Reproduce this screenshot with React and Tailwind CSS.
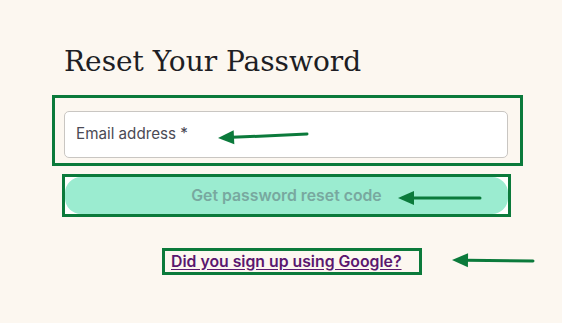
import React from "react";

function Arrow({ x1, y1, x2, y2 }) {
  const dx = x2 - x1, dy = y2 - y1;
  const len = Math.sqrt(dx * dx + dy * dy);
  const ux = dx / len, uy = dy / len;
  const hl = 16, hw = 7;
  const bx = x2 - ux * hl, by = y2 - uy * hl;
  const p1 = `${bx - uy * hw},${by + ux * hw}`;
  const p2 = `${bx + uy * hw},${by - ux * hw}`;
  return (
    <g>
      <line x1={x1} y1={y1} x2={bx + ux * 2} y2={by + uy * 2} stroke="#0b7a3b" strokeWidth="3" strokeLinecap="round" />
      <polygon points={`${x2},${y2} ${p1} ${p2}`} fill="#0b7a3b" />
    </g>
  );
}

export default function App() {
  return (
    <div className="relative w-[562px] h-[323px] overflow-hidden bg-[#fcf7f0] font-['Inter','Liberation_Sans',sans-serif]">
      <div className="flex flex-col pt-[44px]">
        <h1 className="ml-[64px] text-[28px] leading-[36px] text-[#1e1e24] font-['DejaVu_Serif','Liberation_Serif',serif]">
          Reset Your Password
        </h1>
        <div className="mt-[15px] ml-[52px] w-[471px] h-[71px] border-[3px] border-[#0b7a3b] pt-[13px] pl-[9px]">
          <div className="w-[444px] h-[47px] bg-white border border-[#c9c6c2] rounded-[5px] flex items-center pl-[11px]">
            <span className="text-[15.2px] text-[#4b4a55]">Email address *</span>
          </div>
        </div>
        <div className="mt-[8px] ml-[62px] w-[449px] h-[43px] border-[3px] border-[#0b7a3b] bg-white">
          <div className="w-full h-full bg-[#9becd0] rounded-[16px] flex items-center justify-center">
            <span className="text-[15.8px] font-semibold text-[#78a89f]">Get password reset code</span>
          </div>
        </div>
        <div className="mt-[31px] ml-[162px] w-[260px] h-[27px] border-[3px] border-[#0b7a3b] flex items-center pl-[6px]">
          <a href="#" className="text-[15.8px] font-semibold text-[#5a176f] underline underline-offset-2 leading-none">
            Did you sign up using Google?
          </a>
        </div>
      </div>
      <svg className="absolute left-0 top-0" width="562" height="323">
        <Arrow x1={307} y1={134} x2={218} y2={138} />
        <Arrow x1={480} y1={198} x2={398} y2={198} />
        <Arrow x1={533} y1={261} x2={452} y2={260} />
      </svg>
    </div>
  );
}
